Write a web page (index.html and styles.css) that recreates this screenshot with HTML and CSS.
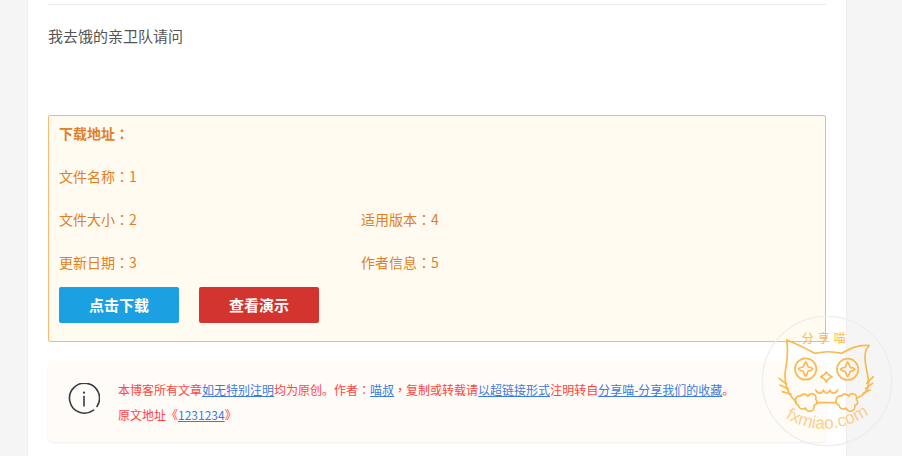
FILE: index.html
```html
<!DOCTYPE html>
<html lang="zh-CN">
<head>
<meta charset="utf-8">
<title>我去饿的亲卫队请问</title>
<link rel="stylesheet" href="styles.css">
</head>
<body>
<main class="card">
  <hr class="rule">
  <p class="lead">我去饿的亲卫队请问</p>
  <section class="download">
    <div class="row row-head"><strong>下载地址<span class="mark" lang="zh-TW">：</span></strong></div>
    <div class="row"><span>文件名称<span class="mark" lang="zh-TW">：</span>1</span></div>
    <div class="row"><span class="col">文件大小<span class="mark" lang="zh-TW">：</span>2</span><span>适用版本<span class="mark" lang="zh-TW">：</span>4</span></div>
    <div class="row"><span class="col">更新日期<span class="mark" lang="zh-TW">：</span>3</span><span>作者信息<span class="mark" lang="zh-TW">：</span>5</span></div>
    <div class="buttons">
      <a class="btn btn-blue">点击下载</a>
      <a class="btn btn-red">查看演示</a>
    </div>
  </section>
  <section class="notice">
    <svg class="notice-icon" viewBox="0 0 32 32" width="32" height="32" aria-hidden="true">
      <path d="M25.5 27.2A15 15 0 1 1 29 23.5" fill="none" stroke="#3a3a48" stroke-width="1.6" stroke-linecap="round"/>
      <circle cx="16" cy="9.7" r="1.1" fill="#3a3a48"/>
      <path d="M16 13.5V23" stroke="#3a3a48" stroke-width="1.6" stroke-linecap="round"/>
    </svg>
    <div class="notice-text">
      <p>本博客所有文章<a>如无特别注明</a>均为原创。作者<span class="mark" lang="zh-TW">：</span><a>喵叔</a><span class="mark" lang="zh-TW">，</span>复制或转载请<a>以超链接形式</a>注明转自<a>分享喵-分享我们的收藏</a>。</p>
      <p>原文地址《<a>1231234</a>》</p>
    </div>
  </section>
</main>
<svg class="stamp" viewBox="0 0 450 420" width="150" height="140" aria-hidden="true">
  <circle cx="225" cy="195" r="194" fill="none" stroke="#eee" stroke-width="4"/>
  <text x="221" y="80" class="stamp-title">分享喵</text>
  <g fill="none" stroke="#fbb94f" stroke-width="5" stroke-linecap="round" stroke-linejoin="round">
    <path d="M134 260C108 236 98 205 99 178C100 150 112 120 104 72C132 82 162 98 189 112C215 106 245 106 269 112C290 100 315 85 352 89C344 94 339 106 339 125C339 150 350 175 349 205C348 222 338 236 316 246"/>
    <circle cx="161" cy="159" r="32"/>
    <circle cx="287" cy="160" r="32"/>
    <path transform="translate(161 159)" d="M0 -22C6 -14 6 -8 8 -6C12 -6 16 -6 22 0C16 6 12 6 8 6C6 8 6 14 0 22C-6 14 -6 8 -8 6C-12 6 -16 6 -22 0C-16 -6 -12 -6 -8 -6C-6 -8 -6 -14 0 -22Z"/>
    <path transform="translate(287 160)" d="M0 -22C6 -14 6 -8 8 -6C12 -6 16 -6 22 0C16 6 12 6 8 6C6 8 6 14 0 22C-6 14 -6 8 -8 6C-12 6 -16 6 -22 0C-16 -6 -12 -6 -8 -6C-6 -8 -6 -14 0 -22Z"/>
    <path d="M223 168C226 175 231 178 240 182C231 185 227 188 223 198C219 188 215 185 206 182C215 178 220 175 223 168Z"/>
    <path d="M191 222C198 235 210 234 214 222C220 235 228 235 234 222C238 234 250 235 257 222"/>
    <path d="M81 187L104 204M84 207L109 219M91 227L117 235M364 182L344 202M362 202L341 217M354 222L334 232"/>
    <path d="M194 260H252"/>
    <path d="M146 240A13 13 0 0 1 168 241A12 12 0 0 1 191 250A10 10 0 0 1 186 268A13 13 0 0 1 160 276A13 13 0 0 1 139 268A13 13 0 0 1 131 250A12 12 0 0 1 146 240Z"/>
    <path d="M268 240A13 13 0 0 1 290 241A12 12 0 0 1 313 250A10 10 0 0 1 308 268A13 13 0 0 1 282 276A13 13 0 0 1 261 268A13 13 0 0 1 253 250A12 12 0 0 1 268 240Z"/>
  </g>
  <path id="stamp-arc" d="M84 296Q222 386 366 285" fill="none"/>
  <text class="stamp-url"><textPath href="#stamp-arc" startOffset="50%">fxmiao.com</textPath></text>
</svg>
</body>
</html>
```

FILE: styles.css
```css
* { box-sizing: border-box; }
html, body {
  margin: 0;
  height: 456px;
  overflow: hidden;
  background: #f5f5f5;
  font-family: "Noto Sans CJK SC", "Open Sans", sans-serif;
}
p { margin: 0; }
.card {
  width: 820px;
  height: 456px;
  margin-left: 27px;
  padding: 4px 20px 0;
  background: #fff;
  border-left: 1px solid #eee;
  border-right: 1px solid #eee;
}
.rule {
  margin: 0;
  height: 1px;
  border: 0;
  background: #eaeaea;
}
.lead {
  margin-top: 19px;
  height: 91px;
  font-size: 15px;
  line-height: 24px;
  color: #555;
}
.mark { font-family: "Noto Sans CJK TC", sans-serif; }
.download {
  height: 227px;
  padding: 0 10px;
  background: #fffbf0;
  border: 1px solid #f6b873;
  border-radius: 2px;
  font-size: 14px;
  color: #e07f26;
}
.row {
  display: flex;
  height: 43px;
  align-items: center;
}
.row-head {
  height: 38px;
  padding-bottom: 4px;
}
.col { width: 302px; }
.buttons {
  display: flex;
  gap: 20px;
  margin-top: 4px;
}
.btn {
  width: 120px;
  height: 36px;
  border-radius: 2px;
  color: #fff;
  font-size: 15px;
  font-weight: 700;
  line-height: 36px;
  text-align: center;
}
.btn-blue { background: #1ba1e2; }
.btn-red { background: #d33430; }
.notice {
  display: flex;
  align-items: center;
  gap: 18px;
  height: 80px;
  margin-top: 20px;
  padding-left: 20px;
  background: #fffbf7;
  border-radius: 6px;
  box-shadow: 0 1px 2px rgba(0, 0, 0, .08);
}
.notice-icon {
  flex: none;
  margin-bottom: 7px;
}
.notice-text {
  font-size: 12px;
  line-height: 25px;
  color: #f44;
}
.notice-text a {
  color: #3a7be0;
  text-decoration: underline;
}
.stamp {
  position: absolute;
  left: 752px;
  top: 316px;
}
.stamp-title {
  fill: #fbb94f;
  font-size: 36px;
  letter-spacing: 12px;
  text-anchor: middle;
}
.stamp-url {
  fill: #fbcf8a;
  font-family: "Liberation Sans", sans-serif;
  font-size: 52px;
  text-anchor: middle;
}
```
